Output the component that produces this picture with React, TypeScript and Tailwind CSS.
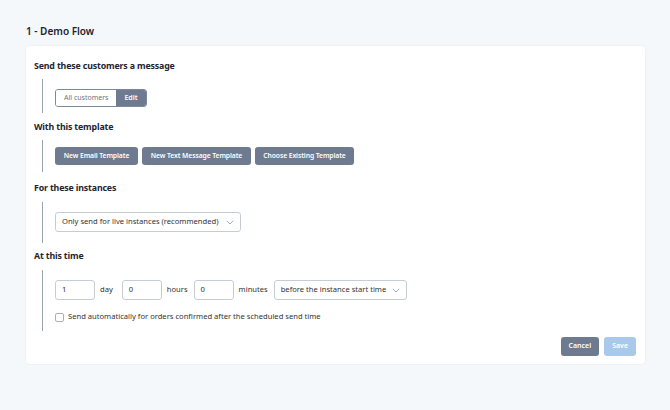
import React from "react";

function Chevron() {
  return (
    <svg width="8" height="5" viewBox="0 0 8 5" fill="none" className="ml-auto shrink-0">
      <path d="M0.8 0.8 L4 4 L7.2 0.8" stroke="#9aa3b0" strokeWidth="0.9" />
    </svg>
  );
}

function Section({ title, children, className = "" }: { title: string; children: React.ReactNode; className?: string }) {
  return (
    <div className={className}>
      <h3 className="text-[8.8px] leading-[12px] font-bold tracking-[-0.15px] text-[#1e2530]">{title}</h3>
      {children}
    </div>
  );
}

function SlateButton({ children, className = "" }: { children: React.ReactNode; className?: string }) {
  return (
    <button
      className={`h-[18px] rounded-[3px] bg-[#6d7a8f] text-white text-[6.8px] font-semibold leading-none whitespace-nowrap tracking-[-0.1px] ${className}`}
    >
      {children}
    </button>
  );
}

function NumberBox({ value }: { value: string }) {
  return (
    <div className="w-[40px] h-[20px] border border-[#c6ccd5] rounded-[3px] bg-white flex items-center px-[6px] text-[7.6px] text-[#333]">
      {value}
    </div>
  );
}

export default function App() {
  return (
    <div
      className="min-h-[410px] w-full bg-[#f5f8fb] px-[26px] pt-[24px] pb-[45px]"
      style={{ fontFamily: '"Noto Sans", "Open Sans", sans-serif' }}
    >
      <h1 className="text-[10px] leading-[14px] font-semibold text-[#1c2330] mb-[8px] w-fit">1 - Demo Flow</h1>

      <div className="w-[619px] bg-white rounded-[4px] shadow-[0_0_2px_rgba(0,0,0,0.08)] px-[8px] pt-[14px] pb-[8px]">
        <Section title="Send these customers a message">
          <div className="ml-[8px] mt-[7px] border-l border-[#9aa4b2] pl-[12px] pt-[10px] pb-[6px]">
            <div className="flex h-[18px] w-fit rounded-[3px] overflow-hidden border border-[#7c889b]">
              <div className="px-[8px] flex items-center text-[7px] text-[#6b7585] bg-white whitespace-nowrap">All customers</div>
              <div className="px-[8px] flex items-center text-[7px] font-semibold text-white bg-[#6d7a8f]">Edit</div>
            </div>
          </div>
        </Section>

        <Section title="With this template" className="mt-[8px]">
          <div className="ml-[8px] mt-[7px] border-l border-[#9aa4b2] pl-[12px] pt-[7px] pb-[7px]">
            <div className="flex gap-[4px]">
              <SlateButton className="w-[83px]">New Email Template</SlateButton>
              <SlateButton className="w-[109px]">New Text Message Template</SlateButton>
              <SlateButton className="w-[99px]">Choose Existing Template</SlateButton>
            </div>
          </div>
        </Section>

        <Section title="For these instances" className="mt-[10px]">
          <div className="ml-[8px] mt-[8px] border-l border-[#9aa4b2] pl-[12px] pt-[10px] pb-[11px]">
            <div className="w-[186px] h-[20px] border border-[#c6ccd5] rounded-[3px] bg-white flex items-center pl-[6px] pr-[6px] text-[7.6px] text-[#333]">
              <span className="whitespace-nowrap">Only send for live instances (recommended)</span>
              <Chevron />
            </div>
          </div>
        </Section>

        <Section title="At this time" className="mt-[7px]">
          <div className="ml-[8px] mt-[8px] border-l border-[#9aa4b2] pl-[12px] pt-[10px] pb-[9px]">
            <div className="flex items-center text-[7.6px] text-[#333]">
              <NumberBox value="1" />
              <span className="ml-[5px] mr-[9px]">day</span>
              <NumberBox value="0" />
              <span className="ml-[5px] mr-[6px]">hours</span>
              <NumberBox value="0" />
              <span className="ml-[5px] mr-[6px]">minutes</span>
              <div className="w-[133px] h-[20px] border border-[#c6ccd5] rounded-[3px] bg-white flex items-center px-[6px]">
                <span className="whitespace-nowrap">before the instance start time</span>
                <Chevron />
              </div>
            </div>
            <label className="mt-[12px] flex items-center gap-[4px] h-[10px] text-[7.6px] text-[#333]">
              <span className="w-[9px] h-[9px] border border-[#a9b0bb] rounded-[2px] bg-white" />
              Send automatically for orders confirmed after the scheduled send time
            </label>
          </div>
        </Section>

        <div className="flex justify-end gap-[5px] mt-[6px] pr-[1px]">
          <button className="h-[19px] px-[8px] rounded-[3px] bg-[#6d7a8f] text-white text-[7px] font-semibold">Cancel</button>
          <button className="h-[19px] px-[8px] rounded-[3px] bg-[#a9c9ea] text-white text-[7px] font-semibold">Save</button>
        </div>
      </div>
    </div>
  );
}
